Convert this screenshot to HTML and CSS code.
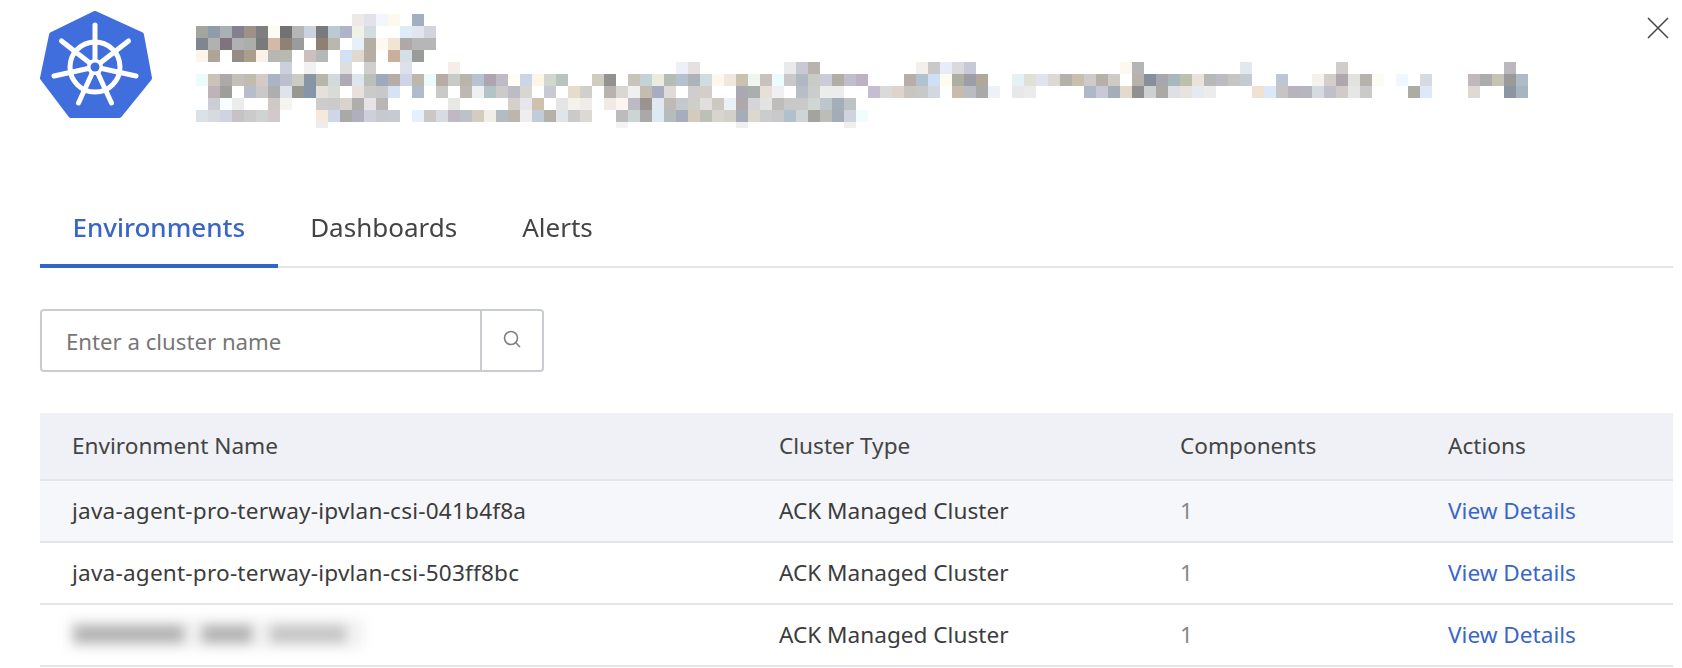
FILE: index.html
```html
<!DOCTYPE html>
<html lang="en">
<head>
<meta charset="utf-8">
<title>Kubernetes cluster</title>
<link rel="stylesheet" href="styles.css">
</head>
<body>
<div class="panel">
  <header class="head">
    <svg class="logo" viewBox="0 0 112 108" aria-hidden="true">
      <polygon class="hept" points="55,4 101,25 109,68 79,105 31,105 3,68 12,25"/>
      <g class="helm">
        <circle cx="55" cy="57" r="25"/>
        <path d="M55 57V15M55 57L88.500 31M55 57L96 66M55 57L71.500 93M55 57L38.500 93M55 57L14 66M55 57L21.500 31"/>
      </g>
      <circle class="hub-ring" cx="55" cy="57" r="8"/>
      <circle class="hub" cx="55" cy="57" r="4.500"/>
    </svg>
    <svg class="mosaic" viewBox="0 0 111 10" aria-hidden="true">
      <rect x="13" y="0" fill="#efe8e8"/><rect x="14" y="0" fill="#e3e1ea"/><rect x="15" y="0" fill="#f2f7fd"/><rect x="16" y="0" fill="#fdf9ef"/><rect x="18" y="0" fill="#a2afc0"/>
      <rect x="0" y="1" fill="#a3a5a1"/><rect x="1" y="1" fill="#8f9dab"/><rect x="2" y="1" fill="#a9b1b5"/><rect x="3" y="1" fill="#84818e"/><rect x="4" y="1" fill="#9c9287"/><rect x="5" y="1" fill="#7f7f7f"/><rect x="6" y="1" fill="#fefaf4"/><rect x="7" y="1" fill="#727272"/><rect x="8" y="1" fill="#b6b6b6"/><rect x="9" y="1" fill="#ccd3e0"/><rect x="10" y="1" fill="#787a7e"/><rect x="11" y="1" fill="#bccbd2"/><rect x="12" y="1" fill="#b1b3c8"/><rect x="13" y="1" fill="#f1f2e6"/><rect x="14" y="1" fill="#d2dde2"/><rect x="17" y="1" fill="#deecf8"/><rect x="18" y="1" fill="#e2e5ee"/><rect x="19" y="1" fill="#d0d5de"/>
      <rect x="0" y="2" fill="#808690"/><rect x="1" y="2" fill="#b1b1b1"/><rect x="2" y="2" fill="#7f747c"/><rect x="3" y="2" fill="#b1b1b3"/><rect x="4" y="2" fill="#acaeaa"/><rect x="5" y="2" fill="#797b7b"/><rect x="6" y="2" fill="#d4b9a8"/><rect x="7" y="2" fill="#8f8174"/><rect x="8" y="2" fill="#999b9d"/><rect x="10" y="2" fill="#8f8073"/><rect x="11" y="2" fill="#b8b8ac"/><rect x="13" y="2" fill="#e6f0f8"/><rect x="14" y="2" fill="#b5aea4"/><rect x="15" y="2" fill="#fdf9f0"/><rect x="16" y="2" fill="#f0e4d2"/><rect x="17" y="2" fill="#b0a8a8"/><rect x="18" y="2" fill="#b6b6b6"/><rect x="19" y="2" fill="#b6b6b6"/>
      <rect x="0" y="3" fill="#fdf5ec"/><rect x="1" y="3" fill="#aea598"/><rect x="3" y="3" fill="#978b85"/><rect x="4" y="3" fill="#ab9f8b"/><rect x="5" y="3" fill="#faf2e8"/><rect x="6" y="3" fill="#b7b8b4"/><rect x="7" y="3" fill="#b8b9b3"/><rect x="9" y="3" fill="#cbbfbf"/><rect x="10" y="3" fill="#b3b8b8"/><rect x="12" y="3" fill="#d0e2f4"/><rect x="13" y="3" fill="#e0d9cf"/><rect x="14" y="3" fill="#b6aea3"/><rect x="16" y="3" fill="#c9b09a"/><rect x="17" y="3" fill="#d4e0e6"/><rect x="18" y="3" fill="#9a9c9a"/>
      <rect x="7" y="4" fill="#ccd0dc"/><rect x="9" y="4" fill="#f1f1f1"/><rect x="12" y="4" fill="#dedede"/><rect x="14" y="4" fill="#cfcfcf"/><rect x="17" y="4" fill="#dee1ea"/><rect x="21" y="4" fill="#f5eee8"/><rect x="40" y="4" fill="#eef0f8"/><rect x="41" y="4" fill="#e6e1e0"/><rect x="49" y="4" fill="#eaeaea"/><rect x="50" y="4" fill="#c8c9d2"/><rect x="51" y="4" fill="#b8b3af"/><rect x="60" y="4" fill="#f5efe9"/><rect x="61" y="4" fill="#c9c9c9"/><rect x="62" y="4" fill="#e8ecf8"/><rect x="63" y="4" fill="#dadada"/><rect x="64" y="4" fill="#c5c9d8"/><rect x="77" y="4" fill="#fdf8f0"/><rect x="78" y="4" fill="#b5b5b5"/><rect x="87" y="4" fill="#e2e8ee"/><rect x="95" y="4" fill="#d0cccc"/><rect x="109" y="4" fill="#bdb8c0"/>
      <rect x="0" y="5" fill="#eefbfd"/><rect x="1" y="5" fill="#cbc3b8"/><rect x="2" y="5" fill="#aca9a8"/><rect x="3" y="5" fill="#c3c0ba"/><rect x="4" y="5" fill="#c0bdae"/><rect x="5" y="5" fill="#d6cac8"/><rect x="6" y="5" fill="#abb4c4"/><rect x="7" y="5" fill="#bcc0cc"/><rect x="8" y="5" fill="#cbccc4"/><rect x="9" y="5" fill="#8795a6"/><rect x="10" y="5" fill="#b8b5aa"/><rect x="11" y="5" fill="#d3dadc"/><rect x="12" y="5" fill="#aeabb5"/><rect x="13" y="5" fill="#dfe5ec"/><rect x="14" y="5" fill="#bcbfb8"/><rect x="15" y="5" fill="#9eaabb"/><rect x="16" y="5" fill="#b5aea8"/><rect x="17" y="5" fill="#d0d4e8"/><rect x="18" y="5" fill="#bcb8ae"/><rect x="19" y="5" fill="#eefbfd"/><rect x="20" y="5" fill="#b8aca6"/><rect x="21" y="5" fill="#c9cbc9"/><rect x="22" y="5" fill="#b8b5ac"/><rect x="23" y="5" fill="#b8c2d0"/><rect x="24" y="5" fill="#afa4b0"/><rect x="25" y="5" fill="#bfbbc6"/><rect x="26" y="5" fill="#fffdf4"/><rect x="27" y="5" fill="#ccd4e8"/><rect x="28" y="5" fill="#fdf5e6"/><rect x="29" y="5" fill="#d2d6cf"/><rect x="30" y="5" fill="#b7c4c0"/><rect x="33" y="5" fill="#d0ccc0"/><rect x="34" y="5" fill="#92938f"/><rect x="36" y="5" fill="#c8c3bb"/><rect x="37" y="5" fill="#c4d4d6"/><rect x="38" y="5" fill="#ecebdf"/><rect x="39" y="5" fill="#b5bcb4"/><rect x="40" y="5" fill="#b5c1ce"/><rect x="41" y="5" fill="#adb3b8"/><rect x="42" y="5" fill="#d0dde0"/><rect x="43" y="5" fill="#fef7ee"/><rect x="44" y="5" fill="#f0e8dc"/><rect x="45" y="5" fill="#c9c2ae"/><rect x="46" y="5" fill="#eef6ee"/><rect x="47" y="5" fill="#c9c1bd"/><rect x="48" y="5" fill="#ecfcfe"/><rect x="49" y="5" fill="#c9c9c9"/><rect x="50" y="5" fill="#b0b8c4"/><rect x="51" y="5" fill="#c9cbc5"/><rect x="52" y="5" fill="#ccccd8"/><rect x="53" y="5" fill="#b1afa5"/><rect x="54" y="5" fill="#c1bfcb"/><rect x="55" y="5" fill="#bcb2c2"/><rect x="59" y="5" fill="#b8aea8"/><rect x="60" y="5" fill="#b0c2d0"/><rect x="61" y="5" fill="#d0e0f4"/><rect x="62" y="5" fill="#fefcf0"/><rect x="63" y="5" fill="#adb0a0"/><rect x="64" y="5" fill="#9d9da8"/><rect x="65" y="5" fill="#b0a898"/><rect x="68" y="5" fill="#e5f1f4"/><rect x="69" y="5" fill="#dfe1d6"/><rect x="70" y="5" fill="#dfe4ee"/><rect x="71" y="5" fill="#dbd8d6"/><rect x="72" y="5" fill="#b2b1aa"/><rect x="73" y="5" fill="#c9bfae"/><rect x="74" y="5" fill="#cfcbcb"/><rect x="75" y="5" fill="#b5b1a9"/><rect x="76" y="5" fill="#cecbc4"/><rect x="78" y="5" fill="#b7b2ac"/><rect x="79" y="5" fill="#868f9a"/><rect x="80" y="5" fill="#a9a7ae"/><rect x="81" y="5" fill="#a8b8bc"/><rect x="82" y="5" fill="#bdc0ac"/><rect x="83" y="5" fill="#eae3db"/><rect x="84" y="5" fill="#b8b8b8"/><rect x="85" y="5" fill="#bcbcc4"/><rect x="86" y="5" fill="#c6c6c6"/><rect x="87" y="5" fill="#c6cad2"/><rect x="90" y="5" fill="#bcc6d4"/><rect x="93" y="5" fill="#f5f1ec"/><rect x="94" y="5" fill="#d3ceca"/><rect x="95" y="5" fill="#aea8ae"/><rect x="96" y="5" fill="#e2e3de"/><rect x="97" y="5" fill="#b6b2ac"/><rect x="98" y="5" fill="#fafdf6"/><rect x="100" y="5" fill="#f0f7fe"/><rect x="102" y="5" fill="#d6dbe0"/><rect x="106" y="5" fill="#c0b8bc"/><rect x="107" y="5" fill="#acacac"/><rect x="108" y="5" fill="#c6c3b5"/><rect x="109" y="5" fill="#9a9a9a"/><rect x="110" y="5" fill="#afbcc8"/>
      <rect x="1" y="6" fill="#c0b3b8"/><rect x="2" y="6" fill="#9e9e9a"/><rect x="4" y="6" fill="#b8bdcb"/><rect x="5" y="6" fill="#c9c9c9"/><rect x="6" y="6" fill="#aeaeae"/><rect x="7" y="6" fill="#dfe4ea"/><rect x="8" y="6" fill="#97988f"/><rect x="9" y="6" fill="#8795a8"/><rect x="10" y="6" fill="#e6e0da"/><rect x="11" y="6" fill="#d9dcd6"/><rect x="13" y="6" fill="#e8e0da"/><rect x="14" y="6" fill="#c9cbc8"/><rect x="15" y="6" fill="#c8c8c8"/><rect x="16" y="6" fill="#d6e2f6"/><rect x="18" y="6" fill="#aebccc"/><rect x="20" y="6" fill="#c9c9c9"/><rect x="22" y="6" fill="#bdb8b4"/><rect x="23" y="6" fill="#eef0f1"/><rect x="24" y="6" fill="#b2c4c6"/><rect x="25" y="6" fill="#cccbca"/><rect x="26" y="6" fill="#bcbcc6"/><rect x="27" y="6" fill="#d8d6d0"/><rect x="29" y="6" fill="#c8c9d2"/><rect x="31" y="6" fill="#e6dccb"/><rect x="32" y="6" fill="#d2cfcb"/><rect x="34" y="6" fill="#b8b3ae"/><rect x="35" y="6" fill="#d9d7d1"/><rect x="36" y="6" fill="#f0f0f1"/><rect x="37" y="6" fill="#c4bcb2"/><rect x="38" y="6" fill="#a8acc0"/><rect x="39" y="6" fill="#e0dbd9"/><rect x="41" y="6" fill="#cfcdcd"/><rect x="42" y="6" fill="#d3cfc8"/><rect x="45" y="6" fill="#a8a9b2"/><rect x="46" y="6" fill="#a9aeae"/><rect x="47" y="6" fill="#e9dfd8"/><rect x="48" y="6" fill="#f0eff2"/><rect x="50" y="6" fill="#b8bec8"/><rect x="51" y="6" fill="#c9cdcb"/><rect x="52" y="6" fill="#ebedea"/><rect x="53" y="6" fill="#ececec"/><rect x="56" y="6" fill="#c4bed0"/><rect x="57" y="6" fill="#dadada"/><rect x="58" y="6" fill="#ded4cb"/><rect x="59" y="6" fill="#c9c6c0"/><rect x="60" y="6" fill="#c8c8c8"/><rect x="61" y="6" fill="#d1d8df"/><rect x="63" y="6" fill="#c8bbae"/><rect x="64" y="6" fill="#b9bcc0"/><rect x="65" y="6" fill="#a9a9a9"/><rect x="66" y="6" fill="#eef2f8"/><rect x="68" y="6" fill="#e6e9e8"/><rect x="69" y="6" fill="#ebebed"/><rect x="74" y="6" fill="#adb9c8"/><rect x="75" y="6" fill="#c9c8d8"/><rect x="76" y="6" fill="#a5aeb8"/><rect x="77" y="6" fill="#e3dacd"/><rect x="78" y="6" fill="#909090"/><rect x="79" y="6" fill="#cdd1d1"/><rect x="80" y="6" fill="#aaa9a4"/><rect x="81" y="6" fill="#dfe0e6"/><rect x="82" y="6" fill="#e8e3de"/><rect x="83" y="6" fill="#e4e9f2"/><rect x="84" y="6" fill="#ececec"/><rect x="88" y="6" fill="#f0e2d2"/><rect x="89" y="6" fill="#dce8f8"/><rect x="90" y="6" fill="#c6c4c4"/><rect x="91" y="6" fill="#b8b3bc"/><rect x="92" y="6" fill="#b6b6c0"/><rect x="93" y="6" fill="#d6dbe0"/><rect x="94" y="6" fill="#c0bfcb"/><rect x="95" y="6" fill="#d0cac8"/><rect x="96" y="6" fill="#e6e6e6"/><rect x="97" y="6" fill="#cacaca"/><rect x="101" y="6" fill="#aeaaa4"/><rect x="102" y="6" fill="#dde9f8"/><rect x="106" y="6" fill="#dedad3"/><rect x="109" y="6" fill="#8c96a2"/><rect x="110" y="6" fill="#a8b4be"/>
      <rect x="1" y="7" fill="#cdcdd5"/><rect x="2" y="7" fill="#f8fdfe"/><rect x="3" y="7" fill="#ececec"/><rect x="6" y="7" fill="#cfc9c7"/><rect x="7" y="7" fill="#f5f4ee"/><rect x="10" y="7" fill="#cdcbcb"/><rect x="11" y="7" fill="#cbcbcb"/><rect x="12" y="7" fill="#d9d3cf"/><rect x="13" y="7" fill="#b0aeac"/><rect x="14" y="7" fill="#e6e3e6"/><rect x="15" y="7" fill="#b9b7b5"/><rect x="21" y="7" fill="#e8e9e4"/><rect x="26" y="7" fill="#d5d0cb"/><rect x="27" y="7" fill="#e6e6ec"/><rect x="28" y="7" fill="#d0c0ae"/><rect x="30" y="7" fill="#e5e5e6"/><rect x="31" y="7" fill="#f5f2ec"/><rect x="32" y="7" fill="#efedea"/><rect x="34" y="7" fill="#f1ebe7"/><rect x="35" y="7" fill="#fdf6f0"/><rect x="36" y="7" fill="#bdbac4"/><rect x="37" y="7" fill="#9a9490"/><rect x="38" y="7" fill="#e1e8ef"/><rect x="39" y="7" fill="#bfb9b7"/><rect x="40" y="7" fill="#c3c9cc"/><rect x="41" y="7" fill="#cfcfca"/><rect x="42" y="7" fill="#e2dedb"/><rect x="43" y="7" fill="#cdc9c1"/><rect x="44" y="7" fill="#eaf2f8"/><rect x="45" y="7" fill="#aea8aa"/><rect x="46" y="7" fill="#d5d5d9"/><rect x="47" y="7" fill="#e3e3e3"/><rect x="48" y="7" fill="#bfbcbc"/><rect x="49" y="7" fill="#c9c9c9"/><rect x="50" y="7" fill="#c9c9c9"/><rect x="51" y="7" fill="#cfd6d4"/><rect x="52" y="7" fill="#bcc6cb"/><rect x="53" y="7" fill="#a3aeb8"/><rect x="54" y="7" fill="#bcc2c6"/>
      <rect x="0" y="8" fill="#dae2e8"/><rect x="1" y="8" fill="#d6dcde"/><rect x="2" y="8" fill="#d0d3e1"/><rect x="3" y="8" fill="#c6c2c6"/><rect x="4" y="8" fill="#cbcbcb"/><rect x="5" y="8" fill="#cfd3d2"/><rect x="6" y="8" fill="#d3c8ca"/><rect x="10" y="8" fill="#f6e8da"/><rect x="11" y="8" fill="#cfd6ea"/><rect x="12" y="8" fill="#a9a9a7"/><rect x="13" y="8" fill="#afafc0"/><rect x="14" y="8" fill="#cfcfdc"/><rect x="15" y="8" fill="#c6c9d0"/><rect x="16" y="8" fill="#c6cbd0"/><rect x="18" y="8" fill="#e6f0fa"/><rect x="19" y="8" fill="#cbc7c7"/><rect x="20" y="8" fill="#d8dbe2"/><rect x="21" y="8" fill="#c0b8c4"/><rect x="22" y="8" fill="#bcc2c6"/><rect x="23" y="8" fill="#d5ccc0"/><rect x="24" y="8" fill="#f1eee8"/><rect x="25" y="8" fill="#b3bcc2"/><rect x="26" y="8" fill="#bcb6ae"/><rect x="27" y="8" fill="#eeeeef"/><rect x="28" y="8" fill="#c0ccd8"/><rect x="29" y="8" fill="#b5b1a8"/><rect x="30" y="8" fill="#e0e5ea"/><rect x="31" y="8" fill="#cacaca"/><rect x="32" y="8" fill="#dcd8d4"/><rect x="35" y="8" fill="#bcbcbc"/><rect x="36" y="8" fill="#cbd6d4"/><rect x="37" y="8" fill="#aaa8ab"/><rect x="38" y="8" fill="#deeaf2"/><rect x="39" y="8" fill="#b4bcbc"/><rect x="40" y="8" fill="#a8acbc"/><rect x="41" y="8" fill="#d3cbbb"/><rect x="42" y="8" fill="#bcc0b8"/><rect x="43" y="8" fill="#d8d5cf"/><rect x="44" y="8" fill="#d3d0ca"/><rect x="45" y="8" fill="#a7adb8"/><rect x="46" y="8" fill="#dcd8d0"/><rect x="47" y="8" fill="#cbcdcd"/><rect x="48" y="8" fill="#c9c9cc"/><rect x="49" y="8" fill="#b0c0cc"/><rect x="50" y="8" fill="#cdd5d5"/><rect x="51" y="8" fill="#a5a39f"/><rect x="52" y="8" fill="#bcbdb8"/><rect x="53" y="8" fill="#a3adb8"/><rect x="54" y="8" fill="#cfd3de"/><rect x="55" y="8" fill="#f0fcfe"/>
      <rect class="half" x="10" y="9" fill="#ececec"/><rect class="half" x="35" y="9" fill="#f3f3f5"/><rect class="half" x="45" y="9" fill="#efefef"/><rect class="half" x="54" y="9" fill="#efefef"/>
    </svg>
    <button class="close" type="button" aria-label="Close">
      <svg viewBox="0 0 22 22" aria-hidden="true"><path d="M1 1L21 21M21 1L1 21"/></svg>
    </button>
  </header>

  <nav class="tabs">
    <a class="tab tab-active">Environments</a>
    <a class="tab">Dashboards</a>
    <a class="tab">Alerts</a>
  </nav>

  <div class="search">
    <span class="search-input">Enter a cluster name</span>
    <span class="search-btn">
      <svg viewBox="0 0 20 20" aria-hidden="true"><circle cx="9" cy="9" r="6.500"/><path d="M13.800 13.800L18 18"/></svg>
    </span>
  </div>

  <table class="grid">
    <colgroup><col class="c1"><col class="c2"><col class="c3"><col class="c4"></colgroup>
    <thead>
      <tr><th>Environment Name</th><th>Cluster Type</th><th>Components</th><th>Actions</th></tr>
    </thead>
    <tbody>
      <tr class="hover"><td class="name">java-agent-pro-terway-ipvlan-csi-041b4f8a</td><td>ACK Managed Cluster</td><td class="num">1</td><td><a class="link">View Details</a></td></tr>
      <tr><td class="name">java-agent-pro-terway-ipvlan-csi-503ff8bc</td><td>ACK Managed Cluster</td><td class="num">1</td><td><a class="link">View Details</a></td></tr>
      <tr><td class="name"><span class="blur"><i class="b1"></i><i class="b2"></i><i class="b3"></i></span></td><td>ACK Managed Cluster</td><td class="num">1</td><td><a class="link">View Details</a></td></tr>
    </tbody>
  </table>
</div>
</body>
</html>
```

FILE: styles.css
```css
* { box-sizing: border-box; }
html, body { margin: 0; height: 668px; overflow: hidden; background: #fff; }
body { font-family: "Noto Sans", "Open Sans", sans-serif; color: #333; font-size: 20px; }
.panel { padding: 0 9px 0 40px; }

.head { display: flex; align-items: flex-start; height: 190px; padding-top: 10px; }
.logo { width: 112px; height: 108px; flex: none; filter: blur(.5px); }
.hept { fill: #406fdd; stroke: #406fdd; stroke-width: 6; stroke-linejoin: round; }
.helm { fill: none; stroke: #fff; stroke-width: 5; stroke-linecap: round; }
.hub-ring { fill: #fff; }
.hub { fill: #406fdd; }
.mosaic { width: 1332px; height: 120px; flex: none; margin: 4px 0 0 44px; filter: blur(.7px); }
.mosaic rect { width: 1px; height: 1px; }
.mosaic rect.half { height: .5px; }
.close { margin: 7px 0 0 119px; width: 22px; height: 22px; padding: 0; border: 0; background: none; flex: none; }
.close svg { display: block; width: 22px; height: 22px; fill: none; stroke: #444; stroke-width: 1.500; }

.tabs { display: flex; height: 78px; border-bottom: 2px solid #e3e5e8; }
.tab { padding: 0 32.500px; height: 78px; line-height: 74px; font-size: 26px; color: #444; filter: blur(.3px); }
.tab-active { color: #3a66c8; font-weight: 500; border-bottom: 4px solid #2f66cc; }

.search { display: flex; width: 504px; height: 63px; margin-top: 41px; border: 2px solid #c9cdd3; border-radius: 4px; }
.search-input { flex: 1; padding-left: 24px; line-height: 62px; font-size: 22.200px; color: #777; border-right: 2px solid #c9cdd3; }
.search-btn { width: 60px; display: flex; align-items: center; justify-content: center; }
.search-btn svg { width: 20px; height: 20px; margin-top: -4px; fill: none; stroke: #7c8087; stroke-width: 1.600; }

.grid { width: 1633px; margin-top: 41px; border-collapse: collapse; table-layout: fixed; font-size: 22.600px; }
.c1 { width: 707px; }
.c2 { width: 401px; }
.c3 { width: 268px; }
.grid th { height: 67px; padding: 0 32px 2px; text-align: left; font-weight: 400; color: #444; background: #eff1f6; border-bottom: 2px solid #e3e5e8; }
.grid td { height: 62px; padding: 0 32px 2px; border-bottom: 2px solid #e3e5e8; color: #3c3c3c; }
.grid .name { letter-spacing: .2px; }
.grid .num { color: #888; }
.hover td { background: #f6f7fa; }
.link { color: #3a66c8; }
.blur { display: flex; align-items: center; gap: 18px; width: 296px; height: 30px; padding: 0 6px; margin-left: -4px; background: #f2f2f2; filter: blur(6px); }
.blur i { display: block; height: 18px; background: #b4b4b4; }
.b1 { width: 110px; }
.b2 { width: 50px; }
.b3 { width: 76px; opacity: .7; }
```
